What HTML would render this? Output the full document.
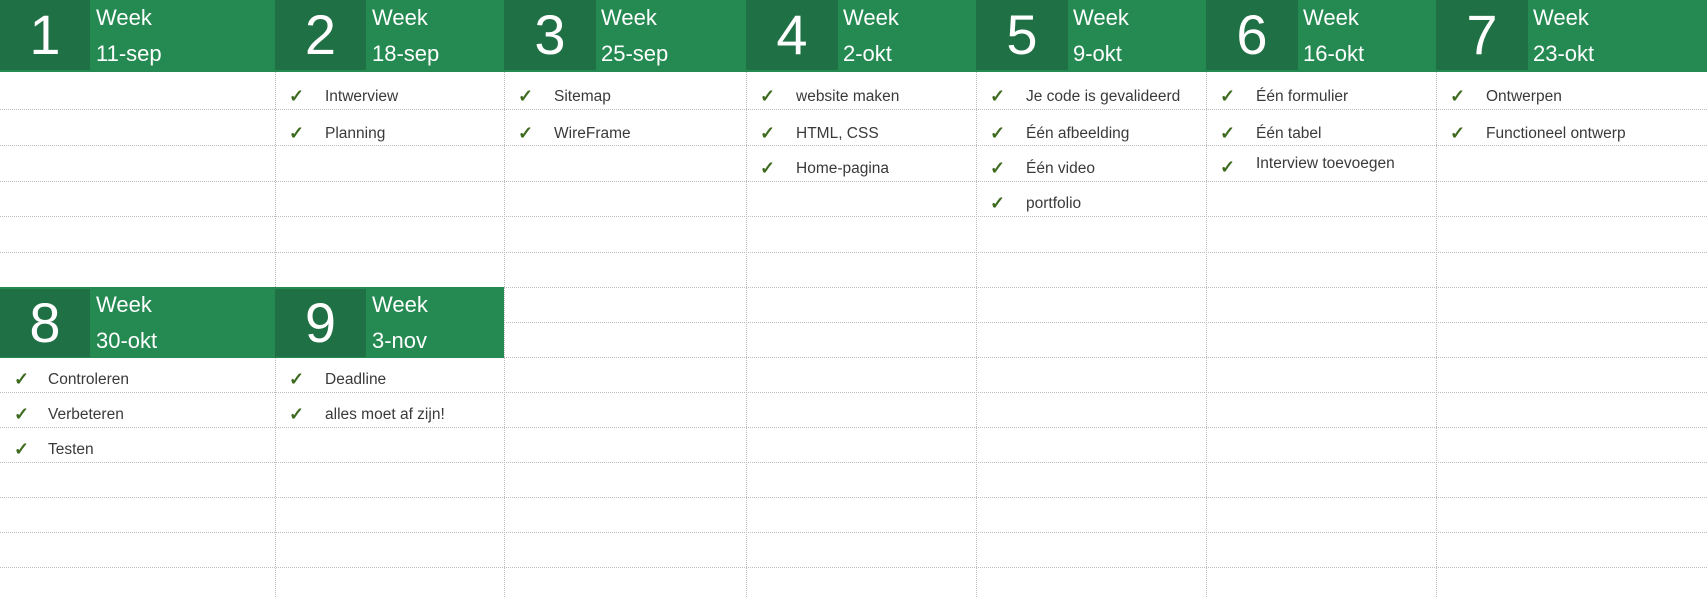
<!DOCTYPE html>
<html><head><meta charset="utf-8"><style>
body{margin:0;width:1707px;height:597px;background:#fff;position:relative;overflow:hidden;font-family:"Liberation Sans",sans-serif}
.h{position:absolute;background:#248a52;height:72px}
.d{position:absolute;background:#1f7044;height:70px;color:#fff;font-size:56px;text-align:center;line-height:70px}
.w{position:absolute;color:#fff;font-size:22px;line-height:24px}
.hl{position:absolute;left:0;width:1707px;border-top:1px dotted #bdbdbd;height:0}
.vl{position:absolute;border-left:1px dotted #bdbdbd;width:0}
.t{position:absolute;font-size:15.5px;color:#3a3a3a;line-height:20px;white-space:nowrap}
.c{position:absolute;color:#3d6b1f;font-size:18px;font-weight:bold;line-height:20px}
</style></head><body>
<div class="hl" style="top:109px"></div><div class="hl" style="top:145px"></div><div class="hl" style="top:181px"></div><div class="hl" style="top:216px"></div><div class="hl" style="top:252px"></div><div class="hl" style="top:287px"></div><div class="hl" style="top:322px"></div><div class="hl" style="top:357px"></div><div class="hl" style="top:392px"></div><div class="hl" style="top:427px"></div><div class="hl" style="top:462px"></div><div class="hl" style="top:497px"></div><div class="hl" style="top:532px"></div><div class="hl" style="top:567px"></div>
<div class="vl" style="left:275px;top:0;height:597px"></div><div class="vl" style="left:504px;top:0;height:597px"></div><div class="vl" style="left:746px;top:0;height:597px"></div><div class="vl" style="left:976px;top:0;height:597px"></div><div class="vl" style="left:1206px;top:0;height:597px"></div><div class="vl" style="left:1436px;top:0;height:597px"></div>
<div class="h" style="left:0;top:0;width:1707px"></div>
<div class="d" style="left:0;top:0;width:90px">1</div><div class="w" style="left:96px;top:6px">Week<br><span style="position:relative;top:12px">11-sep</span></div>
<div class="d" style="left:275px;top:0;width:91px">2</div><div class="w" style="left:372px;top:6px">Week<br><span style="position:relative;top:12px">18-sep</span></div>
<div class="d" style="left:504px;top:0;width:92px">3</div><div class="w" style="left:601px;top:6px">Week<br><span style="position:relative;top:12px">25-sep</span></div>
<div class="d" style="left:746px;top:0;width:92px">4</div><div class="w" style="left:843px;top:6px">Week<br><span style="position:relative;top:12px">2-okt</span></div>
<div class="d" style="left:976px;top:0;width:92px">5</div><div class="w" style="left:1073px;top:6px">Week<br><span style="position:relative;top:12px">9-okt</span></div>
<div class="d" style="left:1206px;top:0;width:92px">6</div><div class="w" style="left:1303px;top:6px">Week<br><span style="position:relative;top:12px">16-okt</span></div>
<div class="d" style="left:1436px;top:0;width:92px">7</div><div class="w" style="left:1533px;top:6px">Week<br><span style="position:relative;top:12px">23-okt</span></div>
<div class="h" style="left:0;top:287px;width:504px;height:71px"></div>
<div class="d" style="left:0;top:289px;width:90px;height:68px;line-height:68px">8</div><div class="w" style="left:96px;top:293px">Week<br><span style="position:relative;top:12px">30-okt</span></div>
<div class="d" style="left:275px;top:289px;width:91px;height:68px;line-height:68px">9</div><div class="w" style="left:372px;top:293px">Week<br><span style="position:relative;top:12px">3-nov</span></div>
<div class="c" style="left:289px;top:86px">✓</div><div class="t" style="left:325px;top:87px">Intwerview</div>
<div class="c" style="left:289px;top:123px">✓</div><div class="t" style="left:325px;top:124px">Planning</div>
<div class="c" style="left:518px;top:86px">✓</div><div class="t" style="left:554px;top:87px">Sitemap</div>
<div class="c" style="left:518px;top:123px">✓</div><div class="t" style="left:554px;top:124px">WireFrame</div>
<div class="c" style="left:760px;top:86px">✓</div><div class="t" style="left:796px;top:87px">website maken</div>
<div class="c" style="left:760px;top:123px">✓</div><div class="t" style="left:796px;top:124px">HTML, CSS</div>
<div class="c" style="left:760px;top:158px">✓</div><div class="t" style="left:796px;top:159px">Home-pagina</div>
<div class="c" style="left:990px;top:86px">✓</div><div class="t" style="left:1026px;top:87px">Je code is gevalideerd</div>
<div class="c" style="left:990px;top:123px">✓</div><div class="t" style="left:1026px;top:124px">Één afbeelding</div>
<div class="c" style="left:990px;top:158px">✓</div><div class="t" style="left:1026px;top:159px">Één video</div>
<div class="c" style="left:990px;top:193px">✓</div><div class="t" style="left:1026px;top:194px">portfolio</div>
<div class="c" style="left:1220px;top:86px">✓</div><div class="t" style="left:1256px;top:87px">Één formulier</div>
<div class="c" style="left:1220px;top:123px">✓</div><div class="t" style="left:1256px;top:124px">Één tabel</div>
<div class="c" style="left:1220px;top:157px">✓</div><div class="t" style="left:1256px;top:154px">Interview toevoegen</div>
<div class="c" style="left:1450px;top:86px">✓</div><div class="t" style="left:1486px;top:87px">Ontwerpen</div>
<div class="c" style="left:1450px;top:123px">✓</div><div class="t" style="left:1486px;top:124px">Functioneel ontwerp</div>
<div class="c" style="left:14px;top:369px">✓</div><div class="t" style="left:48px;top:370px">Controleren</div>
<div class="c" style="left:14px;top:404px">✓</div><div class="t" style="left:48px;top:405px">Verbeteren</div>
<div class="c" style="left:14px;top:439px">✓</div><div class="t" style="left:48px;top:440px">Testen</div>
<div class="c" style="left:289px;top:369px">✓</div><div class="t" style="left:325px;top:370px">Deadline</div>
<div class="c" style="left:289px;top:404px">✓</div><div class="t" style="left:325px;top:405px">alles moet af zijn!</div>
</body></html>
